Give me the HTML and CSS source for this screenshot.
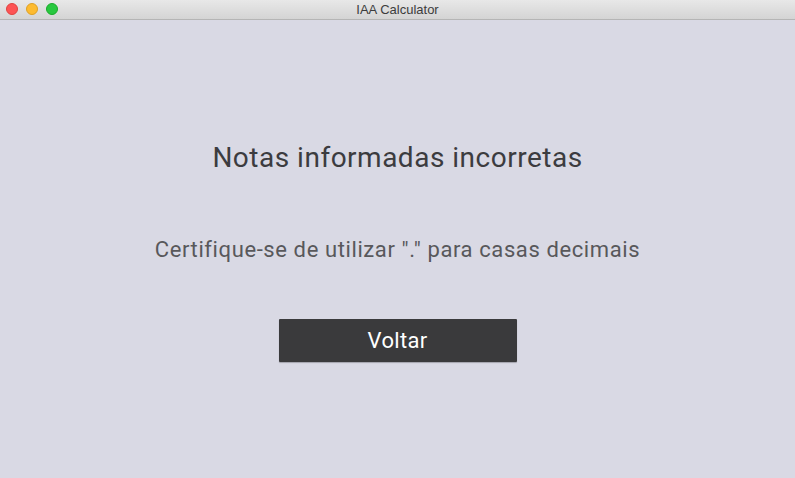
FILE: index.html
```html
<!DOCTYPE html>
<html>
<head>
<meta charset="utf-8">
<link rel="stylesheet" href="styles.css">
</head>
<body>
<div class="window">
  <div class="titlebar">
    <div class="lights">
      <span class="light red"></span>
      <span class="light yellow"></span>
      <span class="light green"></span>
    </div>
    <div class="title">IAA Calculator</div>
  </div>
  <div class="content">
    <h1 class="heading">Notas informadas incorretas</h1>
    <p class="message">Certifique-se de utilizar "." para casas decimais</p>
    <button class="btn">Voltar</button>
  </div>
</div>
</body>
</html>
```
FILE: styles.css
```css
html, body {
  margin: 0;
  padding: 0;
  width: 795px;
  height: 478px;
  overflow: hidden;
}
.window {
  width: 795px;
  height: 478px;
  display: flex;
  flex-direction: column;
  background: #d9d9e4;
  font-family: Roboto, "Noto Sans", sans-serif;
}
.titlebar {
  height: 19px;
  border-bottom: 1px solid #b5b5b5;
  background: linear-gradient(#e8e8e8, #d4d4d4);
  display: flex;
  align-items: center;
  justify-content: center;
  position: relative;
}
.lights {
  position: absolute;
  left: 6px;
  top: 3px;
  display: flex;
  gap: 8px;
}
.light {
  width: 12px;
  height: 12px;
  border-radius: 50%;
  box-sizing: border-box;
}
.red { background: #fd5454; border: 0.5px solid #e0443e; }
.yellow { background: #fdbb2f; border: 0.5px solid #dea123; }
.green { background: #28c83f; border: 0.5px solid #1aab29; }
.title {
  font-family: "Helvetica Neue", "Liberation Sans", Arial, sans-serif;
  font-size: 13px;
  color: #3c3c3c;
}
.content {
  flex: 1;
  display: flex;
  flex-direction: column;
  align-items: center;
}
.heading {
  margin: 122px 0 0;
  font-size: 28px;
  letter-spacing: 0.5px;
  font-weight: 400;
  color: #3c3c3f;
  line-height: 32px;
}
.message {
  margin: 63px 0 0;
  font-size: 22px;
  letter-spacing: 0.6px;
  color: #58585b;
  line-height: 26px;
}
.btn {
  margin-top: 56px;
  width: 238px;
  height: 43px;
  border: none;
  border-radius: 1px;
  background: #3a3a3c;
  color: #ffffff;
  font-family: Roboto, "Noto Sans", sans-serif;
  font-size: 22px;
  letter-spacing: 0.3px;
  box-shadow: 0 1px 1px rgba(0,0,0,0.25);
  padding: 0;
}
```
